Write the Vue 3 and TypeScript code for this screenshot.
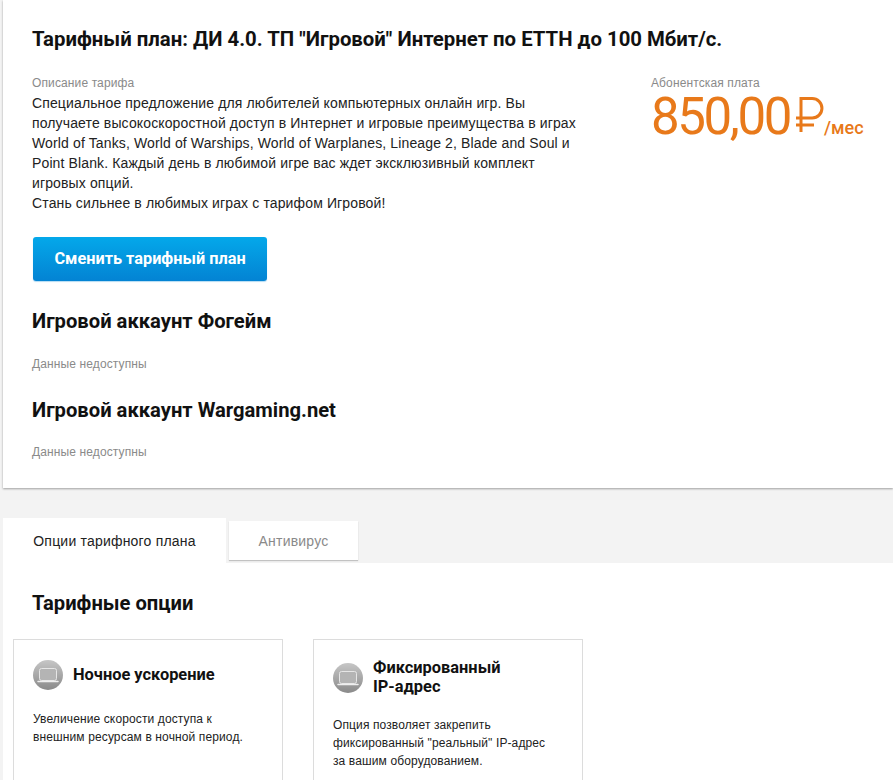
<template>
  <div class="page">
    <section class="plan">
      <h1 class="plan-title">Тарифный план: ДИ 4.0. ТП "Игровой" Интернет по ЕТТН до 100 Мбит/с.</h1>
      <div class="plan-body">
        <div class="plan-desc">
          <div class="label">Описание тарифа</div>
          <p class="desc-text">
            Специальное предложение для любителей компьютерных онлайн игр. Вы<br />
            получаете высокоскоростной доступ в Интернет и игровые преимущества в играх<br />
            World of Tanks, World of Warships, World of Warplanes, Lineage 2, Blade and Soul и<br />
            Point Blank. Каждый день в любимой игре вас ждет эксклюзивный комплект<br />
            игровых опций.<br />
            Стань сильнее в любимых играх с тарифом Игровой!
          </p>
        </div>
        <div class="plan-price">
          <div class="label">Абонентская плата</div>
          <div class="price">
            <span class="price-value">850,00</span>
            <svg class="ruble" width="28" height="36" viewBox="0 0 28 36" fill="none" stroke="#e8791a" stroke-width="3">
              <path d="M5 36V2.500h11.200a9.750 9.750 0 0 1 0 19.500H0" />
              <path d="M0 29h18" />
            </svg>
            <span class="price-unit">/мес</span>
          </div>
        </div>
      </div>
      <button class="btn-change">Сменить тарифный план</button>
      <div v-for="acc in accounts" :key="acc" class="account">
        <h2 class="account-title">{{ acc }}</h2>
        <div class="label">Данные недоступны</div>
      </div>
    </section>

    <div class="tabs">
      <div class="tab active">Опции тарифного плана</div>
      <div class="tab">Антивирус</div>
    </div>

    <section class="options">
      <h2 class="options-title">Тарифные опции</h2>
      <div class="option-grid">
        <div v-for="opt in options" :key="opt.id" class="option-card">
          <div class="option-head">
            <svg class="option-icon" width="30" height="30" viewBox="0 0 30 30">
              <defs>
                <linearGradient :id="opt.id" x1="0" y1="0" x2="0" y2="1">
                  <stop offset="0" stop-color="#c6c6c6" />
                  <stop offset="1" stop-color="#8a8a8a" />
                </linearGradient>
              </defs>
              <circle cx="15" cy="15" r="15" :fill="`url(#${opt.id})`" />
              <rect x="6.500" y="8.500" width="17" height="12" rx="2" fill="#b4b4b4" stroke="#e6e6e6" />
              <path d="M5 21.500h20" stroke="#efefef" stroke-width="1.500" stroke-linecap="round" />
            </svg>
            <div class="option-name">
              <template v-for="(line, i) in opt.name" :key="i">{{ line }}<br v-if="i < opt.name.length - 1" /></template>
            </div>
          </div>
          <p class="option-text">
            <template v-for="(line, i) in opt.text" :key="i">{{ line }}<br v-if="i < opt.text.length - 1" /></template>
          </p>
        </div>
      </div>
    </section>
  </div>
</template>

<script setup lang="ts">
const accounts = ['Игровой аккаунт Фогейм', 'Игровой аккаунт Wargaming.net']

const options = [
  {
    id: 'ic-night',
    name: ['Ночное ускорение'],
    text: ['Увеличение скорости доступа к', 'внешним ресурсам в ночной период.'],
  },
  {
    id: 'ic-ip',
    name: ['Фиксированный', 'IP-адрес'],
    text: ['Опция позволяет закрепить', 'фиксированный "реальный" IP-адрес', 'за вашим оборудованием.'],
  },
]
</script>

<style>
html, body { margin: 0; background: #f3f3f3; overflow: hidden; }
</style>

<style scoped>
.page {
  width: 893px;
  height: 780px;
  overflow: hidden;
  padding-left: 3px;
  box-sizing: border-box;
  font-family: "Liberation Sans", Arial, sans-serif;
  color: #222;
}

.plan {
  height: 488px;
  box-sizing: border-box;
  padding: 27px 0 0 29px;
  background: #fff;
  box-shadow: 0 1px 2px rgba(0, 0, 0, 0.35);
}

.plan-title {
  margin: 0;
  font: 700 20.35px/24px Roboto, sans-serif;
  color: #111;
}

.plan-body { display: flex; margin-top: 25px; }
.plan-desc { width: 619px; }

.label { font-size: 12px; line-height: 14px; color: #8a8a8a; letter-spacing: 0.12px; }

.desc-text {
  margin: 3px 0 0;
  font-size: 14px;
  line-height: 20px;
  letter-spacing: 0.13px;
  color: #222;
  white-space: nowrap;
}

.price { display: flex; align-items: flex-start; margin-top: 2px; color: #e8791a; }
.price-value { font: 400 51px/50px Roboto, sans-serif; letter-spacing: -2.4px; }
.ruble { margin: 4px 0 0 6px; flex: none; }
.price-unit { font: 500 18px/18px Roboto, sans-serif; margin: 27px 0 0 0; }

.btn-change {
  display: block;
  width: 234px;
  height: 44px;
  margin: 24px 0 0 1px;
  border: none;
  border-radius: 3px;
  background: linear-gradient(#04a8ea, #0383d3);
  box-shadow: 0 1px 1px rgba(3, 131, 211, 0.3);
  color: #fff;
  font: 700 16.3px/44px Roboto, sans-serif;
  padding: 0;
}

.account { margin-top: 28px; }
.account + .account { margin-top: 27px; }
.account-title {
  margin: 0 0 24px;
  font: 700 20.2px/24px Roboto, sans-serif;
  color: #111;
}
.account + .account .account-title { margin-bottom: 23px; }

.tabs { display: flex; align-items: flex-start; height: 45px; margin-top: 30px; gap: 3px; }
.tab {
  box-sizing: border-box;
  font-size: 14px;
  letter-spacing: 0.2px;
  text-align: center;
  color: #8a8a8a;
  background: #fff;
  width: 129px;
  height: 39px;
  margin-top: 3px;
  line-height: 40px;
  box-shadow: 0 1px 1px rgba(0, 0, 0, 0.2);
}
.tab.active {
  width: 223px;
  height: 45px;
  margin-top: 0;
  line-height: 46px;
  color: #222;
  box-shadow: none;
}

.options {
  height: 300px;
  background: #fff;
  padding: 28px 0 0 10px;
}
.options-title {
  margin: 0 0 24px 19px;
  font: 700 20.2px/24px Roboto, sans-serif;
  color: #111;
}

.option-grid { display: flex; gap: 30px; }
.option-card {
  box-sizing: border-box;
  width: 270px;
  height: 180px;
  padding: 20px 19px;
  border: 1px solid #dcdcdc;
}
.option-head { display: flex; align-items: center; gap: 10px; min-height: 30px; }
.option-icon { flex: none; }
.option-name { margin-top: -2px; font: 700 16.4px/19px Roboto, sans-serif; color: #111; }
.option-text { margin: 20px 0 0; font-size: 12px; line-height: 18px; letter-spacing: 0.12px; color: #222; white-space: nowrap; }
</style>
